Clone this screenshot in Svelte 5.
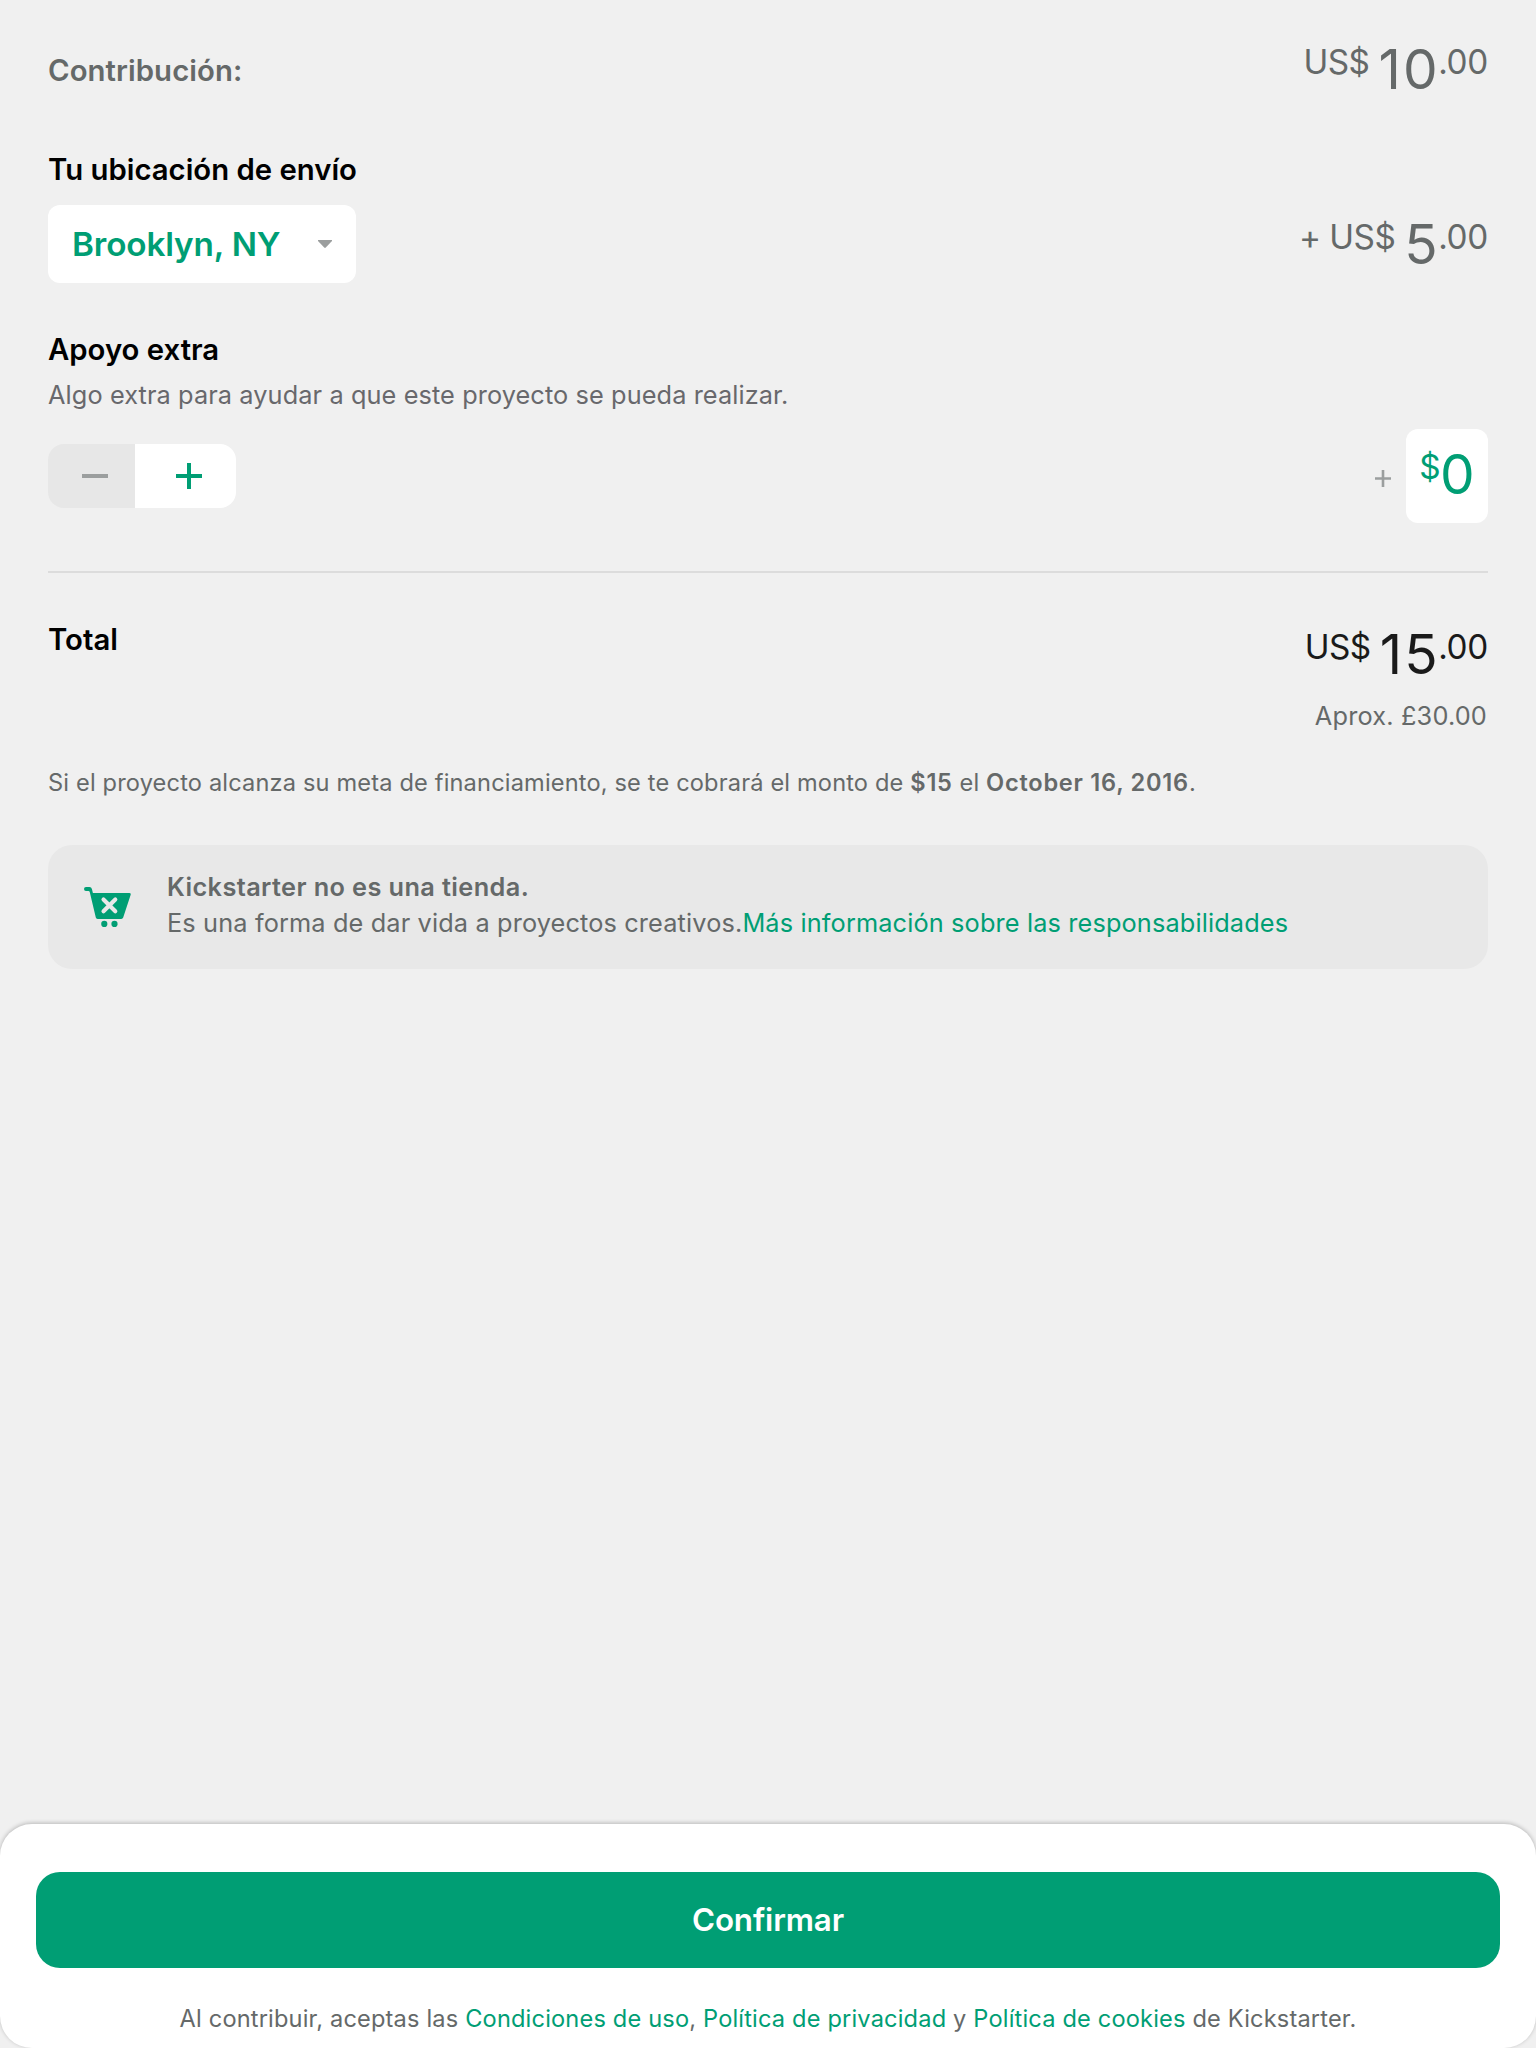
<script>
  let extra = $state(0);
</script>

{#snippet money(whole, prefix)}
  <div class="money">
    <span class="small prefix">{prefix}</span>
    <span class="big">{whole}</span>
    <span class="small cents">.00</span>
  </div>
{/snippet}

<div class="page">
  <main>
    <section class="row pledge">
      <h2 class="muted">Contribución:</h2>
      {@render money('10', 'US$')}
    </section>

    <section class="row shipping">
      <div>
        <h2 class="ship-title">Tu ubicación de envío</h2>
        <button class="select">
          <span>Brooklyn, NY</span>
          <svg width="14" height="9" viewBox="0 0 14 9"><path d="M0 0H14V1L7.8 7.6Q7 8.4 6.2 7.6L0 1Z" fill="#9b9e9e" /></svg>
        </button>
      </div>
      <div class="ship-cost">{@render money('5', '+ US$')}</div>
    </section>

    <section class="bonus">
      <h2 class="bonus-title">Apoyo extra</h2>
      <p class="hint">Algo extra para ayudar a que este proyecto se pueda realizar.</p>
      <div class="bonus-row">
        <div class="stepper">
          <button class="minus" aria-label="Menos" onclick={() => (extra = Math.max(0, extra - 1))}>
            <svg width="26" height="26" viewBox="0 0 26 26"><path d="M0 13H26" stroke="#9b9e9e" stroke-width="4" /></svg>
          </button>
          <button class="plus" aria-label="Más" onclick={() => (extra += 1)}>
            <svg width="26" height="26" viewBox="0 0 26 26"><path d="M0 13H26M13 0V26" stroke="#009e74" stroke-width="4" /></svg>
          </button>
        </div>
        <div class="amount">
          <svg width="16" height="17" viewBox="0 0 16 17"><path d="M0 8.5H16M8 0V17" stroke="#9b9e9e" stroke-width="2.6" /></svg>
          <div class="field"><span class="small">$</span><span class="big">{extra}</span></div>
        </div>
      </div>
    </section>

    <hr />

    <section class="row total">
      <h2 class="total-title">Total</h2>
      <div class="total-sum">
        {@render money('15', 'US$')}
        <p class="approx">Aprox. £30.00</p>
      </div>
    </section>

    <p class="note">Si el proyecto alcanza su meta de financiamiento, se te cobrará el monto de <b>$15</b> el <b>October 16, 2016</b>.</p>

    <aside>
      <svg class="cart" width="47" height="40" viewBox="0 0 47 40">
        <path d="M2 0H5.5Q7.4 0 7.9 2L8.9 6H45.3Q47.2 6 46.6 7.9L39.2 30.6Q38.7 32 37.2 32H13.6Q12.1 32 11.8 30.6L5.8 5.2Q5.5 4 4.5 4H2Q0 4 0 2Q0 0 2 0Z" fill="#009e74" />
        <path d="M19.5 12.5L31.3 24.3M31.3 12.5L19.5 24.3" stroke="#e8e8e8" stroke-width="4.1" stroke-linecap="round" />
        <circle cx="20.3" cy="36.9" r="3.1" fill="#009e74" />
        <circle cx="30.5" cy="36.9" r="3.1" fill="#009e74" />
      </svg>
      <div>
        <p class="card-title">Kickstarter no es una tienda.</p>
        <p class="card-text">Es una forma de dar vida a proyectos creativos.<a href="#more">Más información sobre las responsabilidades</a></p>
      </div>
    </aside>
  </main>

  <footer>
    <button class="confirm">Confirmar</button>
    <p class="legal">Al contribuir, aceptas las <a href="#terms">Condiciones de uso</a>, <a href="#privacy">Política de privacidad</a> y <a href="#cookies">Política de cookies</a> de Kickstarter.</p>
  </footer>
</div>

<style>
  :global(body) { background: #f0f0f0; }
  .page {
    width: 1536px;
    height: 2048px;
    display: flex;
    flex-direction: column;
    justify-content: space-between;
    overflow: hidden;
    background: #f0f0f0;
    color: #656969;
    font-family: Inter, "Liberation Sans", sans-serif;
  }
  h2, p { margin: 0; white-space: nowrap; }
  button { border: 0; padding: 0; font: inherit; }
  svg { display: block; flex: none; }
  a { color: #009e74; text-decoration: none; }
  main { padding: 41px 48px 0; }
  h2 { font-size: 29.3px; line-height: 38px; height: 36px; font-weight: 600; color: #000; }
  .row { display: flex; justify-content: space-between; align-items: flex-start; }
  .money { display: flex; align-items: flex-start; justify-content: flex-end; }
  .small { font-size: 33.3px; line-height: 43px; }
  .big { font-size: 55px; line-height: 56px; }
  .money .big { margin-right: -1.8px; letter-spacing: 2.2px; }
  .cents { letter-spacing: -0.3px; }
  .prefix { margin-right: 9px; letter-spacing: -0.5px; }

  .pledge { height: 56px; }
  .pledge h2 { margin-top: 11px; letter-spacing: 0.08px; color: #656969; }
  .shipping { margin-top: 54px; height: 132px; }
  .select {
    display: flex;
    align-items: center;
    justify-content: space-between;
    width: 308px;
    height: 78px;
    margin-top: 18px;
    padding: 0 24px 0 24px;
    border-radius: 12px;
    background: #fff;
    color: #009e74;
    font-size: 33.3px;
    font-weight: 600;
    letter-spacing: -0.15px;
  }
  .ship-cost { margin-top: 65px; }

  .bonus { margin-top: 48px; }
  .hint { margin-top: 12px; font-size: 25.3px; line-height: 32px; letter-spacing: 0.1px; color: #68686c; }
  .bonus-row { display: flex; align-items: center; justify-content: space-between; margin-top: 18px; height: 94px; }
  .stepper { display: flex; height: 64px; border-radius: 16px; overflow: hidden; }
  .stepper button { display: flex; align-items: center; }
  .minus { width: 87px; padding-left: 34px; background: #e7e7e7; }
  .plus { width: 101px; padding-left: 41px; background: #fff; }
  .amount { display: flex; align-items: center; gap: 15px; }
  .amount > svg { margin-top: 5px; }
  .field {
    display: flex;
    align-items: flex-start;
    justify-content: center;
    width: 82px;
    height: 94px;
    padding-top: 17px;
    box-sizing: border-box;
    border-radius: 12px;
    background: #fff;
    color: #009e74;
  }
  .field .small { letter-spacing: -0.6px; }

  hr { height: 2px; margin: 48px 0 0; border: 0; background: #dcdcdc; }
  .total { margin-top: 48px; height: 111px; }
  .total-sum { margin-top: 5px; color: #1a1a1a; }
  .approx { margin-top: 18px; padding-right: 1px; font-size: 25.3px; line-height: 32px; letter-spacing: 0.18px; text-align: right; color: #656969; }
  .note { height: 32px; margin-top: 34px; font-size: 23.6px; line-height: 34px; letter-spacing: 0.16px; }
  b { font-weight: 600; letter-spacing: 0.74px; }

  aside {
    display: flex;
    height: 124px;
    margin-top: 47px;
    padding: 24px 36px;
    box-sizing: border-box;
    border-radius: 24px;
    background: #e8e8e8;
    font-size: 25.3px;
    line-height: 36px;
    letter-spacing: 0.14px;
  }
  .cart { margin: 18px 36px 0 0; }
  .card-title { font-weight: 600; letter-spacing: 0.4px; }

  footer {
    height: 224px;
    padding: 48px 36px 0;
    box-sizing: border-box;
    border-radius: 32px;
    background: #fff;
    box-shadow: 0 -1px 4px rgba(0, 0, 0, 0.24);
    text-align: center;
  }
  .confirm {
    width: 100%;
    height: 96px;
    border-radius: 24px;
    background: #009e74;
    color: #fff;
    font-size: 31.3px;
    font-weight: 600;
    letter-spacing: -0.12px;
  }
  .legal { margin-top: 34px; font-size: 23.6px; line-height: 34px; letter-spacing: 0.17px; }
</style>
